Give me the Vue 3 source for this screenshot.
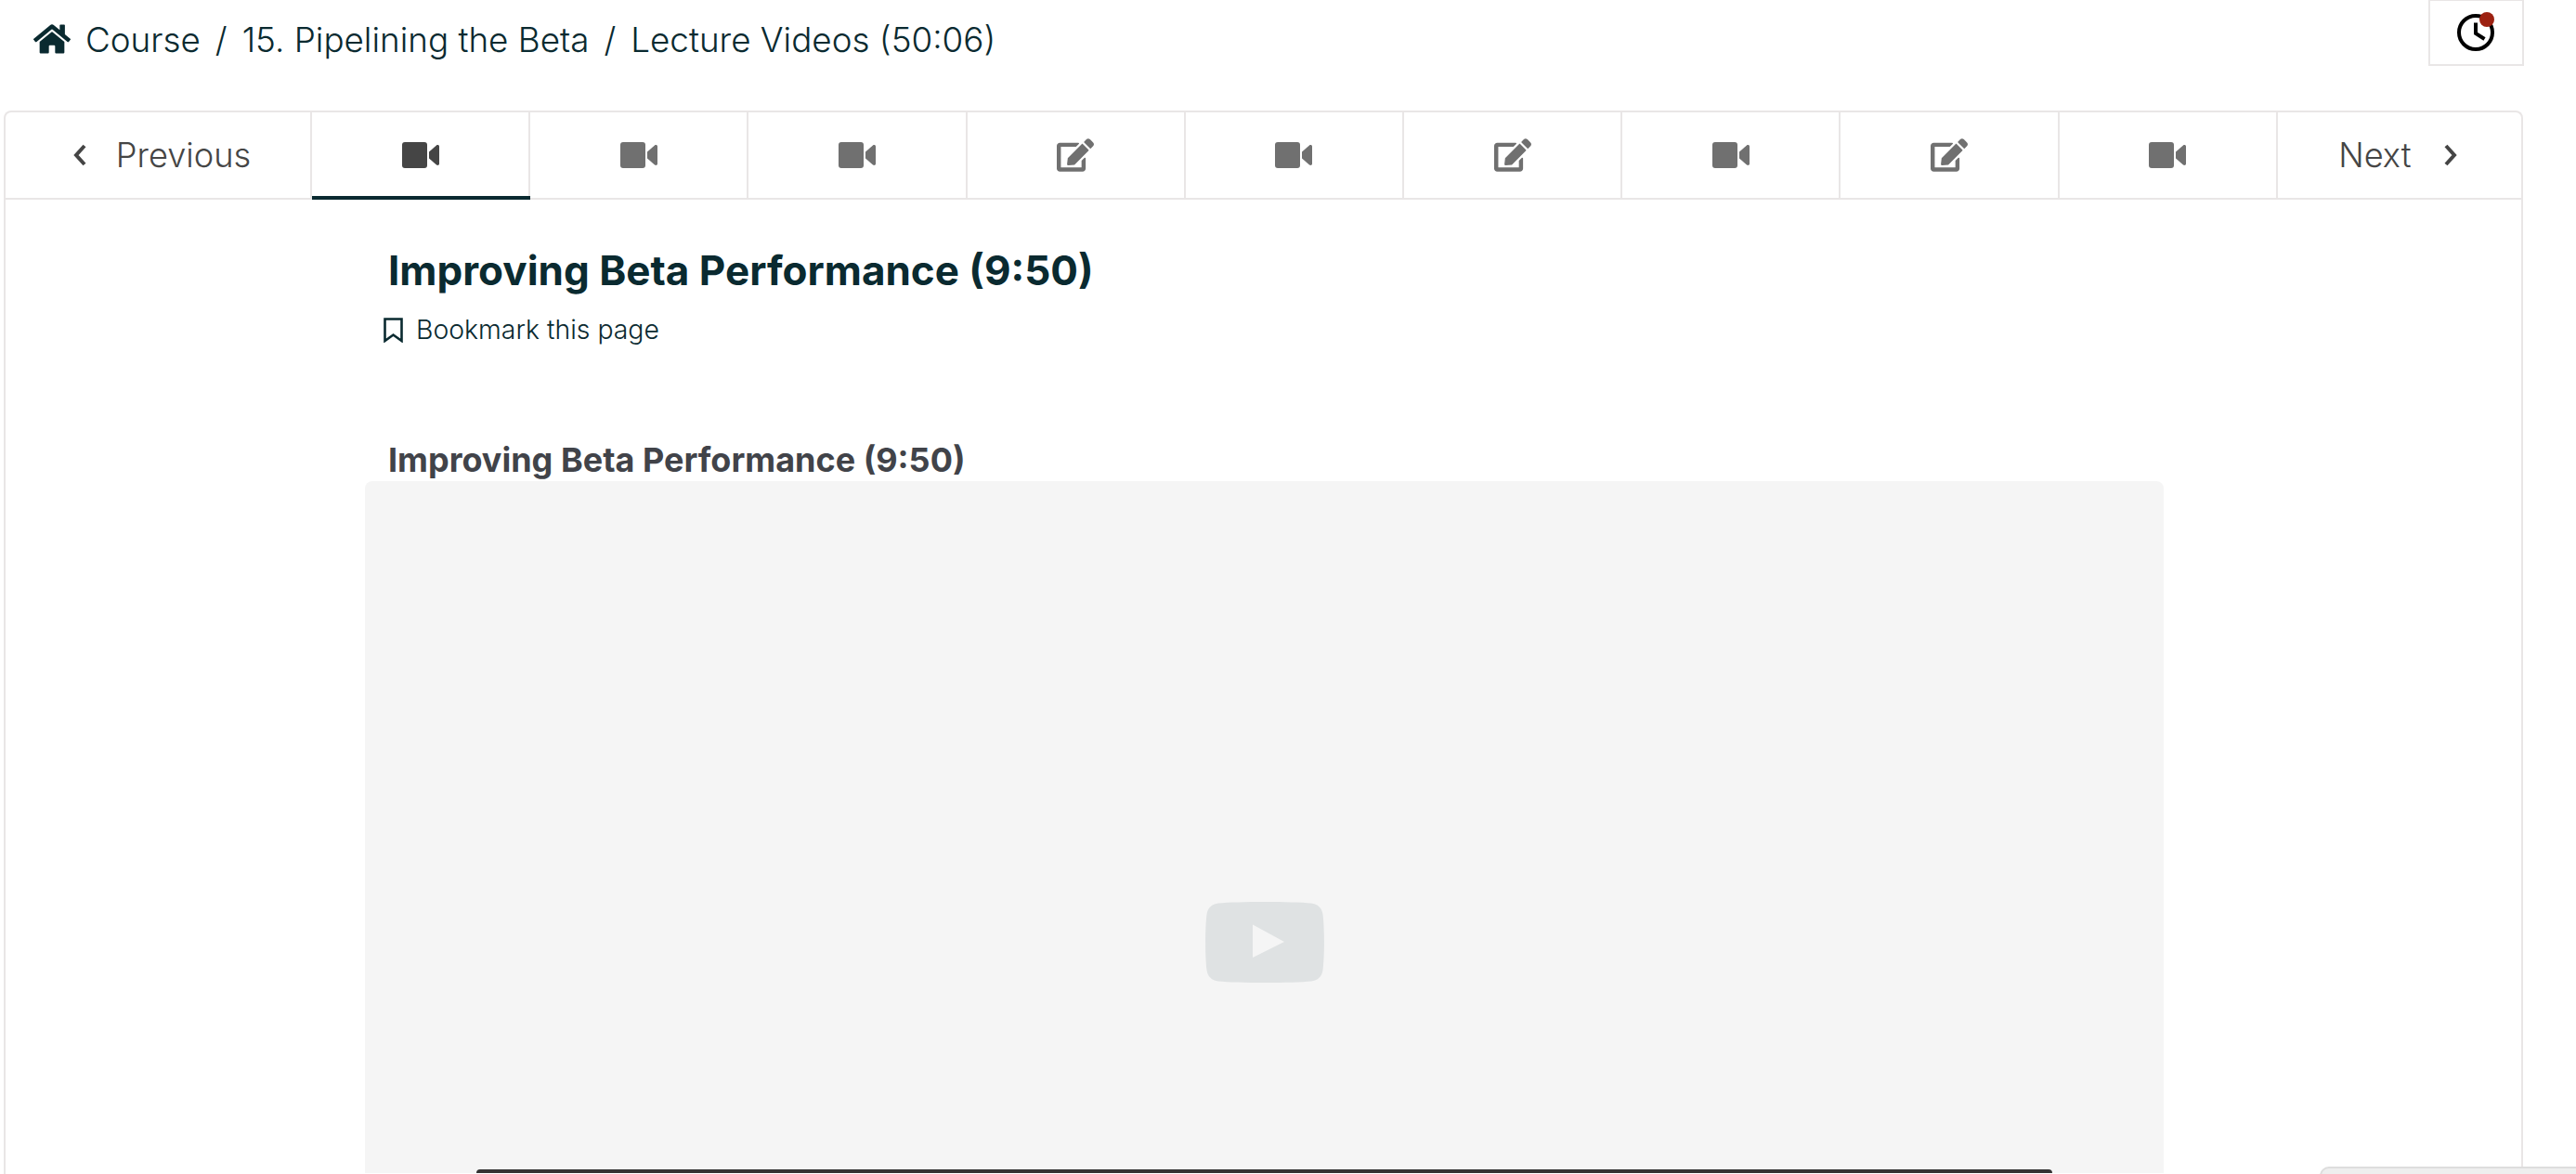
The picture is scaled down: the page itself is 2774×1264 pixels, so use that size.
<template>
  <div class="page">
    <header class="top">
      <nav class="crumbs">
        <svg class="home" viewBox="0 0 576 512"><path :d="homePath" /></svg>
        <span>Course</span>
        <span class="sep">/</span>
        <span>15. Pipelining the Beta</span>
        <span class="sep">/</span>
        <span>Lecture Videos (50:06)</span>
      </nav>
      <button class="timer">
        <svg viewBox="0 0 48 48" width="48" height="48">
          <circle cx="23" cy="24" r="18" class="clock" />
          <path d="M23 13.5V25l9.5 6" class="clock" />
          <circle cx="35" cy="10" r="8" fill="#9c2111" />
        </svg>
      </button>
    </header>

    <main class="card">
      <div class="seq">
        <button class="nav-btn prev">
          <svg class="chev" viewBox="0 0 16 24"><path d="M13 2 4 12l9 10" /></svg>
          <span>Previous</span>
        </button>
        <button v-for="(tab, i) in tabs" :key="i" class="tab" :class="{ active: i === 0 }">
          <svg v-if="tab === 'video'" class="ico-video" viewBox="0 0 40 28">
            <rect width="27" height="28" rx="3" />
            <path d="M29 10.5 37 3.6c1.200-1 3-.4 3 1.200v18.400c0 1.600-1.800 2.200-3 1.200l-8-6.900z" />
          </svg>
          <svg v-else class="ico-edit" viewBox="0 0 576 512"><path :d="editPath" /></svg>
        </button>
        <button class="nav-btn next">
          <span>Next</span>
          <svg class="chev" viewBox="0 0 16 24"><path d="M3 2l9 10-9 10" /></svg>
        </button>
      </div>

      <section class="unit">
        <h1>Improving Beta Performance (9:50)</h1>
        <div class="bookmark">
          <svg viewBox="0 0 21 27" width="21" height="27"><path d="M1.500 1.500h18v23.500l-9-6.500-9 6.500z" /></svg>
          <span>Bookmark this page</span>
        </div>
        <h2>Improving Beta Performance (9:50)</h2>
        <div class="video">
          <svg class="play" viewBox="0 0 128 89">
            <path d="M14 2.500C34 .5 94 .5 114 2.500c7 .7 11.500 5 12.500 12 1.900 15 1.900 45 0 60-1 7-5.500 11.300-12.500 12-20 2-80 2-100 0-7-.7-11.500-5-12.500-12-1.900-15-1.900-45 0-60 1-7 5.500-11.300 12.500-12z" fill="#dfe2e3" />
            <path d="M51 25.500 85 44 51 61z" fill="#f5f5f5" />
          </svg>
          <div class="dark-bar"></div>
        </div>
      </section>
    </main>

    <div class="corner"></div>
  </div>
</template>

<script setup>
const tabs = ['video', 'video', 'video', 'edit', 'video', 'edit', 'video', 'edit', 'video']

const homePath = 'M280.37 148.26L96 300.11V464a16 16 0 0 0 16 16l112.06-.29a16 16 0 0 0 15.92-16V368a16 16 0 0 1 16-16h64a16 16 0 0 1 16 16v95.64a16 16 0 0 0 16 16.05L464 480a16 16 0 0 0 16-16V300L295.67 148.26a12.19 12.19 0 0 0-15.3 0zM571.6 251.47L488 182.56V44.05a12 12 0 0 0-12-12h-56a12 12 0 0 0-12 12v72.61L318.47 43a48 48 0 0 0-61 0L4.34 251.47a12 12 0 0 0-1.6 16.9l25.5 31A12 12 0 0 0 45.15 301l235.22-193.74a12.19 12.19 0 0 1 15.3 0L530.9 301a12 12 0 0 0 16.9-1.6l25.5-31a12 12 0 0 0-1.7-16.93z'
const editPath = 'M402.6 83.2l90.2 90.2c3.8 3.8 3.8 10 0 13.8L274.4 405.6l-92.8 10.3c-12.4 1.4-22.9-9.1-21.5-21.5l10.3-92.8L388.8 83.2c3.8-3.8 10-3.8 13.8 0zm162-22.9l-48.8-48.8c-15.2-15.2-39.9-15.2-55.2 0l-35.4 35.4c-3.8 3.8-3.8 10 0 13.8l90.2 90.2c3.8 3.8 10 3.8 13.8 0l35.4-35.4c15.2-15.3 15.2-40 0-55.2zM384 346.2V448H64V128h229.8c3.2 0 6.2-1.3 8.5-3.500l40-40c7.600-7.600 2.200-20.500-8.500-20.500H48C21.500 64 0 85.500 0 112v352c0 26.500 21.500 48 48 48h352c26.500 0 48-21.500 48-48V306.200c0-10.700-12.900-16-20.500-8.500l-40 40c-2.200 2.300-3.500 5.300-3.500 8.500z'
</script>

<style>
html, body {
  margin: 0;
  height: 1264px;
  overflow: hidden;
  background: #fff;
}
</style>

<style scoped>
.page {
  position: relative;
  width: 2774px;
  height: 1264px;
  overflow: hidden;
  font-family: Inter, "Liberation Sans", sans-serif;
  color: #0a2a30;
  box-sizing: border-box;
  padding-left: 4px;
}

.top {
  display: flex;
  justify-content: space-between;
  align-items: flex-start;
  width: 2714px;
  height: 119px;
}

.crumbs {
  display: flex;
  align-items: center;
  height: 84px;
  padding-left: 32px;
  font-size: 36.8px;
  font-weight: 350;
}

.home {
  width: 40px;
  height: 36px;
  margin-right: 16px;
  fill: #0a2a30;
}

.sep {
  margin: 0 16px;
}

.timer {
  width: 103px;
  height: 71px;
  padding: 0;
  display: flex;
  align-items: center;
  justify-content: center;
  background: #fff;
  border: 2px solid #e9e6e6;
  border-top-width: 1px;
}

.clock {
  fill: none;
  stroke: #000;
  stroke-width: 4;
}

.card {
  width: 2713px;
  height: 1145px;
  box-sizing: border-box;
  border: 2px solid #e9e6e6;
  border-bottom: 0;
  border-radius: 8px 8px 0 0;
}

.seq {
  display: flex;
  height: 94px;
  border-bottom: 2px solid #e9e6e6;
  box-sizing: border-box;
}

button {
  font-family: inherit;
  cursor: pointer;
}

.nav-btn,
.tab {
  display: flex;
  align-items: center;
  justify-content: center;
  background: none;
  border: 0;
  padding: 0;
  color: #454545;
  font-size: 36.2px;
  font-weight: 300;
  box-sizing: border-box;
}

.prev {
  width: 330px;
  gap: 31px;
  padding-left: 8px;
  border-right: 2px solid #e9e6e6;
}

.next {
  flex: 1;
  gap: 35px;
  padding-right: 2px;
}

.chev {
  width: 16px;
  height: 24px;
  fill: none;
  stroke: #454545;
  stroke-width: 4;
}

.tab {
  width: 235.2px;
  border-right: 2px solid #e9e6e6;
  position: relative;
}

.tab.active::after {
  content: "";
  position: absolute;
  left: 0;
  right: -2px;
  bottom: -2px;
  height: 4px;
  background: #0a2a30;
}

.ico-video {
  width: 40px;
  height: 28px;
  fill: #707070;
}

.active .ico-video {
  fill: #454545;
}

.ico-edit {
  width: 40px;
  height: 36px;
  fill: #707070;
}

.unit {
  padding-left: 387px;
  width: 2323px;
  box-sizing: border-box;
}

h1 {
  margin: 0;
  padding: 50px 0 0 25px;
  font-size: 44px;
  line-height: 52px;
  font-weight: 700;
  color: #0a2a30;
}

.bookmark {
  display: flex;
  align-items: center;
  gap: 14px;
  margin: 20px 0 0 20px;
  font-size: 28.4px;
  font-weight: 350;
  line-height: 36px;
}

.bookmark svg {
  fill: none;
  stroke: #0a2a30;
  stroke-width: 2.600;
}

h2 {
  margin: 0;
  padding: 100px 0 0 25px;
  font-size: 36px;
  line-height: 45px;
  font-weight: 700;
  color: #414349;
}

.video {
  position: relative;
  width: 1937px;
  height: 745px;
  display: flex;
  justify-content: center;
  background: #f5f5f5;
  border-radius: 8px 8px 0 0;
}

.play {
  width: 128px;
  height: 89px;
  margin-top: 452px;
}

.dark-bar {
  position: absolute;
  left: 120px;
  top: 741px;
  width: 1697px;
  height: 4px;
  background: #333;
  border-radius: 6px 6px 0 0;
}

.corner {
  position: absolute;
  left: 2498px;
  top: 1256px;
  width: 290px;
  height: 20px;
  background: #eee;
  border: 2px solid #ddd;
  border-radius: 10px 0 0 0;
}
</style>
